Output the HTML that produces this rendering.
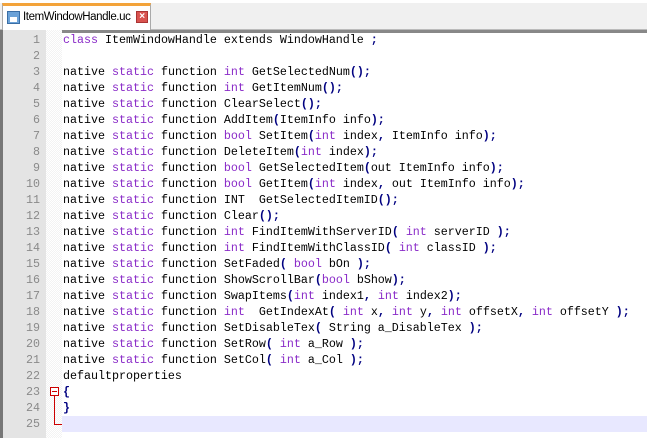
<!DOCTYPE html>
<html><head><style>
body{margin:0;width:647px;height:438px;overflow:hidden;background:#fff;font-family:"Liberation Sans",sans-serif;position:relative}
#tabbar{position:absolute;left:0;top:0;width:647px;height:29px;background:#f0f0f0;border-top:3px solid #fff;box-sizing:border-box}
#tabbar:after{content:"";position:absolute;left:0;right:0;top:26px;height:3px;background:#888;border-top:1px solid #bbb}
#tab{position:absolute;left:2px;top:3px;width:149px;height:27px;background:#fff;border:1px solid #aaa;border-top:3px solid #f3a33a;border-bottom:none;box-sizing:border-box;z-index:2;font-size:11.5px;letter-spacing:-0.4px;color:#000}
#tab .t{position:absolute;left:20px;top:5px}
#ic{position:absolute;left:4px;top:5px;width:13px;height:13px;background:#6ba2d8;border:1px solid #3a6ea5;box-sizing:border-box}
#ic:after{content:"";position:absolute;left:2px;top:5px;width:7px;height:5px;background:#fff}
#cl{position:absolute;left:133px;top:5px;width:12px;height:12px;background:#d9534f;border:1px solid #a33;box-sizing:border-box;color:#fff;font-size:10px;line-height:10px;text-align:center;font-weight:bold}
#ed{position:absolute;left:0;top:30px;width:647px;height:408px;border-left:3px solid #777;box-sizing:border-box}
#gut{position:absolute;left:3px;top:30px;width:43px;height:408px;background:#e4e4e4}
#fold{position:absolute;left:46px;top:30px;width:16px;height:408px;background:repeating-conic-gradient(#f3f3f3 0 25%,#fff 0 50%) 0 0/2px 2px}
.ln{position:absolute;left:3px;width:37px;text-align:right;color:#8a8a8a;font-family:"Liberation Mono",monospace;font-size:11.67px;line-height:16px}
.cd{position:absolute;left:63px;white-space:pre;font-family:"Liberation Mono",monospace;font-size:11.67px;line-height:16px;color:#000}
.k{color:#8a2bc8}
.o{color:#000080;font-weight:bold}
#hl{position:absolute;left:62px;top:416px;width:585px;height:16px;background:#e8e8ff}
</style></head><body>
<div id="tabbar"></div>
<div id="tab"><div id="ic"></div><span class="t">ItemWindowHandle.uc</span><div id="cl">×</div></div>
<div id="ed"></div>
<div id="gut"></div>
<div id="fold"></div>
<div id="hl"></div>
<div style="position:absolute;left:50px;top:387px;width:9px;height:9px;border:1px solid #c00;box-sizing:border-box;background:#fff"></div>
<div style="position:absolute;left:52px;top:391px;width:5px;height:1px;background:#c00"></div>
<div style="position:absolute;left:54px;top:396px;width:1px;height:29px;background:#c00"></div>
<div style="position:absolute;left:54px;top:424px;width:8px;height:1px;background:#c00"></div>
<div id="lines"></div>
<div class="ln" style="top:32px">1<br>2<br>3<br>4<br>5<br>6<br>7<br>8<br>9<br>10<br>11<br>12<br>13<br>14<br>15<br>16<br>17<br>18<br>19<br>20<br>21<br>22<br>23<br>24<br>25</div>
<div class="cd" style="top:32px"><span class="k">class</span> ItemWindowHandle extends WindowHandle <span class="o">;</span>

native <span class="k">static</span> function <span class="k">int</span> GetSelectedNum<span class="o">();</span>
native <span class="k">static</span> function <span class="k">int</span> GetItemNum<span class="o">();</span>
native <span class="k">static</span> function ClearSelect<span class="o">();</span>
native <span class="k">static</span> function AddItem<span class="o">(</span>ItemInfo info<span class="o">);</span>
native <span class="k">static</span> function <span class="k">bool</span> SetItem<span class="o">(</span><span class="k">int</span> index<span class="o">,</span> ItemInfo info<span class="o">);</span>
native <span class="k">static</span> function DeleteItem<span class="o">(</span><span class="k">int</span> index<span class="o">);</span>
native <span class="k">static</span> function <span class="k">bool</span> GetSelectedItem<span class="o">(</span>out ItemInfo info<span class="o">);</span>
native <span class="k">static</span> function <span class="k">bool</span> GetItem<span class="o">(</span><span class="k">int</span> index<span class="o">,</span> out ItemInfo info<span class="o">);</span>
native <span class="k">static</span> function INT  GetSelectedItemID<span class="o">();</span>
native <span class="k">static</span> function Clear<span class="o">();</span>
native <span class="k">static</span> function <span class="k">int</span> FindItemWithServerID<span class="o">(</span> <span class="k">int</span> serverID <span class="o">);</span>
native <span class="k">static</span> function <span class="k">int</span> FindItemWithClassID<span class="o">(</span> <span class="k">int</span> classID <span class="o">);</span>
native <span class="k">static</span> function SetFaded<span class="o">(</span> <span class="k">bool</span> bOn <span class="o">);</span>
native <span class="k">static</span> function ShowScrollBar<span class="o">(</span><span class="k">bool</span> bShow<span class="o">);</span>
native <span class="k">static</span> function SwapItems<span class="o">(</span><span class="k">int</span> index1<span class="o">,</span> <span class="k">int</span> index2<span class="o">);</span>
native <span class="k">static</span> function <span class="k">int</span>  GetIndexAt<span class="o">(</span> <span class="k">int</span> x<span class="o">,</span> <span class="k">int</span> y<span class="o">,</span> <span class="k">int</span> offsetX<span class="o">,</span> <span class="k">int</span> offsetY <span class="o">);</span>
native <span class="k">static</span> function SetDisableTex<span class="o">(</span> String a_DisableTex <span class="o">);</span>
native <span class="k">static</span> function SetRow<span class="o">(</span> <span class="k">int</span> a_Row <span class="o">);</span>
native <span class="k">static</span> function SetCol<span class="o">(</span> <span class="k">int</span> a_Col <span class="o">);</span>
defaultproperties
<span class="o">{</span>
<span class="o">}</span>
</div>
</body></html>
